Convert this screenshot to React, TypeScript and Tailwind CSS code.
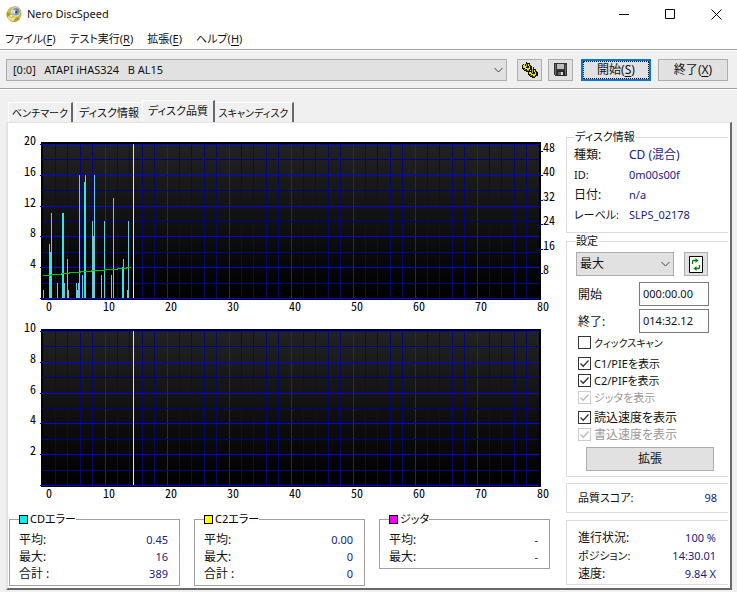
import type { ReactNode } from "react";

const MENUS = [
  { label: "ファイル", hotkey: "F" },
  { label: "テスト実行", hotkey: "R" },
  { label: "拡張", hotkey: "E" },
  { label: "ヘルプ", hotkey: "H" },
];

// plot area inside a chart, in viewBox units
const LEFT = 34;
const RIGHT = 530;
const TOP = 13;
const BOTTOM = 167;

// x offset, width, error count
const BARS = [
  [0, 1, 1],
  [6, 1, 7],
  [7, 2, 6],
  [8, 1, 11],
  [14, 1, 2],
  [19, 2, 11],
  [21, 1, 2],
  [24, 1, 5],
  [25, 1, 1],
  [33, 1, 2],
  [34, 3, 1],
  [35, 1, 2],
  [36, 1, 16],
  [39, 1, 3],
  [41, 2, 15],
  [42, 1, 16],
  [49, 1, 10],
  [50, 2, 8],
  [51, 1, 16],
  [58, 1, 3],
  [61, 1, 10],
  [68, 1, 3],
  [70, 1, 13],
  [79, 2, 4],
  [80, 1, 5],
  [84, 1, 1],
  [85, 1, 10],
];

const CHECKS = [
  { label: "クィックスキャン", checked: false, disabled: false, style: "mb-1 text-[10px]" },
  { label: "C1/PIEを表示", checked: true, disabled: false, style: "text-[11px]" },
  { label: "C2/PIFを表示", checked: true, disabled: false, style: "text-[11px]" },
  { label: "ジッタを表示", checked: true, disabled: true, style: "mb-[3px] text-[11px]" },
  { label: "読込速度を表示", checked: true, disabled: false, style: "text-[12px]" },
  { label: "書込速度を表示", checked: true, disabled: true, style: "text-[12px]" },
];

function Hotkey({ label, hotkey }: { label: string; hotkey: string }) {
  return (
    <>
      {label}(<span className="underline underline-offset-2">{hotkey}</span>)
    </>
  );
}

function Chevron() {
  return (
    <svg
      className="pointer-events-none absolute top-1/2 right-1 h-[5px] w-[9px] -translate-y-1/2"
      viewBox="0 0 9 5"
      fill="none"
      stroke="#444"
    >
      <path d="M.5 .5l4 4 4-4" />
    </svg>
  );
}

function DiscIcon() {
  return (
    <svg className="h-4 w-4" viewBox="0 0 16 16">
      <circle cx="8" cy="8" r="7.6" fill="#d3bf3c" />
      <path d="M1 6a7.5 7.5 0 0 0 13 7L8 9z" fill="#b49c20" />
      <path d="M1.500 11a7 7 0 0 0 6 4l3-4-5-3z" fill="#f0e67c" />
      <circle cx="9.5" cy="6" r="5.4" fill="#dcd9b4" stroke="#aaa36a" strokeWidth=".6" />
      <circle cx="10" cy="5.6" r="3.8" fill="#7c9fc0" />
      <path d="M6.500 3.500l3.500 1.500-1 3-2.500-1z" fill="#dfeaf2" />
      <path d="M10 2.500l3 2-2 2z" fill="#b0675a" />
      <circle cx="10.200" cy="6.200" r="1.200" fill="#2c4b78" />
      <circle cx="5.200" cy="9.800" r="1.600" fill="#fffbd8" stroke="#99882a" strokeWidth=".6" />
    </svg>
  );
}

function GearsIcon() {
  return (
    <svg className="h-4 w-[18px]" viewBox="0 0 18 16" shapeRendering="crispEdges">
      <path d="M5 0h1v1h3v2h1v1h1v4H9v1H8v1H5V9H3V8H2V7H1V3h1V2h3z" fill="#111" />
      <path d="M2 3h2v1h1v2h3V4h1v3H8v1H6V7H4V6H2z" fill="#f3e600" />
      <path d="M3 7h2v1H3zM6 8h2v1H6z" fill="#8c7c00" />
      <path d="M5 2h1v3H5z" fill="#a8a8a8" />
      <path d="M7 2h1v2H7zM3 2h1v1H3z" fill="#f3e600" />
      <path d="M12 5h1v2h2v2h1v1h1v4h-2v1h-1v1h-3v-1H9v-1H8v-1H7V9h1V8h1V7h3z" fill="#111" />
      <path d="M8 10h2v1h1v1h3v-2h1v3h-1v1h-2v-1h-2v-1H8z" fill="#f3e600" />
      <path d="M9 13h2v1H9zM12 14h2v1h-2z" fill="#8c7c00" />
      <path d="M11 7h1v4h-1z" fill="#a8a8a8" />
      <path d="M13 8h1v2h-1zM9 8h1v1H9z" fill="#f3e600" />
    </svg>
  );
}

function FloppyIcon() {
  return (
    <svg className="h-[13px] w-[13px]" viewBox="0 0 13 13" shapeRendering="crispEdges">
      <path d="M0 0h13v13H1l-1-1z" fill="#333" />
      <path d="M1 1h1v11H1zM11 2h1v10h-1z" fill="#6a6a6a" />
      <path d="M3 1h7v5H3z" fill="#bdbdbd" />
      <path d="M3 8h8v5H3z" fill="#222" />
      <path d="M4 9h5v3H4z" fill="#666" />
      <path d="M7 9h2v3H7z" fill="#ddd" />
    </svg>
  );
}

function RefreshIcon() {
  return (
    <svg className="h-[17px] w-[14px]" viewBox="0 0 14 17">
      <path d="M.5 .5h13v16H.5z" fill="#fff" stroke="#000" />
      <path d="M3.500 8V5.500q0-1 1-1H7M10.500 9v2.500q0 1-1 1H7" fill="none" stroke="#0a7d0a" strokeWidth="1.300" />
      <path d="M6.500 2l3 2.500-3 2.500zM7.500 10l-3 2.500 3 2.500z" fill="#0a7d0a" />
    </svg>
  );
}

function Chart({
  id,
  max,
  speed,
  children,
}: {
  id: string;
  max: number;
  speed?: boolean;
  children?: ReactNode;
}) {
  const rows = Array.from({ length: 11 }, (_, i) => i);
  const cols = Array.from({ length: 41 }, (_, i) => i);
  const y = (i: number) => Math.round(TOP + (i * (BOTTOM - TOP)) / 10);
  const x = (i: number) => Math.floor(LEFT + i * 12.4);

  return (
    <svg
      className="block w-full font-['Noto_Sans_CJK_JP',sans-serif] text-[12px] [font-feature-settings:'hwid']"
      viewBox="0 0 557 187"
      shapeRendering="crispEdges"
    >
      <defs>
        <linearGradient id={id} x1="0" y1="0" x2="0" y2="1">
          <stop offset="0" stopColor="#222" />
          <stop offset="1" stopColor="#000" />
        </linearGradient>
      </defs>
      <rect x={LEFT - 2} y={TOP - 2} width={RIGHT - LEFT + 4} height={BOTTOM - TOP + 4} fill="#000" />
      <rect x={LEFT} y={TOP} width={RIGHT - LEFT} height={BOTTOM - TOP} fill={`url(#${id})`} />
      {cols.slice(1, -1).map((i) => (
        <rect
          key={i}
          x={x(i)}
          y={TOP}
          width="1"
          height={BOTTOM - TOP}
          fill={i % 5 === 0 ? "#1c1cb0" : "#08086c"}
        />
      ))}
      {rows.map((i) => (
        <rect
          key={i}
          x={i % 2 ? LEFT - 2 : LEFT - 3}
          y={y(i)}
          width={RIGHT - LEFT + 3}
          height="1"
          fill={i % 2 ? "#00008c" : "#0000f0"}
        />
      ))}
      {rows
        .filter((i) => i % 2 === 0 && i < 10)
        .map((i) => (
          <text key={i} x="27" y={y(i) + 1} textAnchor="end">
            {max - (max / 10) * i}
          </text>
        ))}
      {cols
        .filter((i) => i % 5 === 0)
        .map((i) => (
          <text key={i} x={i ? x(i) + 4 : x(i) + 6} y="180" textAnchor="middle">
            {i * 2}
          </text>
        ))}
      {speed &&
        [8, 16, 24, 32, 40, 48].map((v) => (
          <g key={v}>
            <rect x={RIGHT + 1} y={Math.round(BOTTOM - v * 3.07)} width="3" height="1" fill="#0000f0" />
            <text x={RIGHT + 4} y={Math.round(BOTTOM - v * 3.07) + 1}>
              {v}
            </text>
          </g>
        ))}
      {children}
      <rect x="124" y={TOP} width="1" height={BOTTOM - TOP} fill="#e6e6dc" />
    </svg>
  );
}

function Stats({
  title,
  swatch,
  rows,
}: {
  title: string;
  swatch: string;
  rows: [string, string][];
}) {
  return (
    <fieldset className="min-w-0 flex-1 self-start border border-[#a0a0a0] px-[9px] pb-[3px]">
      <legend className="flex h-[14px] items-center gap-[2px] text-[11px] text-black">
        <span className={`h-[9px] w-[9px] border border-black ${swatch}`} />
        {title}
      </legend>
      <dl className="mt-[5px]">
        {rows.map(([name, value]) => (
          <div key={name} className="flex h-[17px] items-center justify-between">
            <dt>{name}</dt>
            <dd className="pr-[2px] text-[11px] text-[#1a1a80]">{value}</dd>
          </div>
        ))}
      </dl>
    </fieldset>
  );
}

export default function App() {
  return (
    <div className="flex min-h-screen flex-col bg-[#f0f0f0] font-['Noto_Sans','Noto_Sans_CJK_JP',sans-serif] text-[12px] leading-4 text-[#111] [font-feature-settings:'palt']">
      <header className="border-b border-[#a0a0a0] bg-white">
        <div className="flex h-7 items-center pr-[15px] pl-[6px]">
          <DiscIcon />
          <h1 className="ml-[5px] flex-1 text-[11px]">Nero DiscSpeed</h1>
          <div className="flex gap-[35px]">
            <button aria-label="最小化">
              <svg className="h-[11px] w-[11px]" viewBox="0 0 11 11" stroke="#000">
                <path d="M0 5.500h10" />
              </svg>
            </button>
            <button aria-label="最大化">
              <svg className="h-[11px] w-[11px]" viewBox="0 0 11 11" fill="none" stroke="#000">
                <path d="M.5 .5h9v9h-9z" />
              </svg>
            </button>
            <button aria-label="閉じる">
              <svg className="h-[11px] w-[11px]" viewBox="0 0 11 11" stroke="#000">
                <path d="M.5 .5l10 10M10.500 .5l-10 10" />
              </svg>
            </button>
          </div>
        </div>
        <nav className="flex h-[21px] items-center gap-[14px] pl-[5px] text-[11px]">
          {MENUS.map((m) => (
            <button key={m.hotkey}>
              <Hotkey {...m} />
            </button>
          ))}
        </nav>
      </header>

      <div className="flex h-[39px] items-center border-t border-b border-t-white border-b-[#a0a0a0] pr-[9px] pl-[6px]">
        <div className="relative mr-[10px] flex-1">
          <select
            aria-label="ドライブ"
            className="block h-[22px] w-full appearance-none border border-[#adadad] bg-[#e1e1e1] px-[6px] text-[11px]"
          >
            <option>{"[0:0]\u00a0\u00a0\u00a0ATAPI iHAS324\u00a0\u00a0\u00a0B AL15"}</option>
          </select>
          <Chevron />
        </div>
        <button
          aria-label="オプション"
          className="mr-[6px] flex h-[22px] w-[25px] items-center justify-center border border-[#adadad] bg-[#e1e1e1]"
        >
          <GearsIcon />
        </button>
        <button
          aria-label="保存"
          className="mr-2 flex h-[22px] w-[25px] items-center justify-center border border-[#adadad] bg-[#e1e1e1]"
        >
          <FloppyIcon />
        </button>
        <button className="mr-[7px] h-[22px] w-[70px] border-2 border-[#0078d7] bg-[#e1e1e1] leading-none outline-1 -outline-offset-3 outline-black outline-dotted">
          <Hotkey label="開始" hotkey="S" />
        </button>
        <button className="h-[22px] w-[70px] border border-[#adadad] bg-[#e1e1e1] leading-none">
          <Hotkey label="終了" hotkey="X" />
        </button>
      </div>

      <main className="flex flex-1 flex-col border-t border-white pt-[10px] pr-[5px] pb-[2px] pl-[6px]">
        <div role="tablist" className="flex items-end pl-[2px] text-[11px]">
          <button
            role="tab"
            className="mr-[2px] h-[20px] w-[65px] border-t border-r-2 border-l border-t-white border-r-[#696969] border-l-white text-[10px]"
          >
            ベンチマーク
          </button>
          <button role="tab" className="h-[20px] w-[67px] border-t border-l border-white">
            ディスク情報
          </button>
          <button
            role="tab"
            aria-selected="true"
            className="h-[22px] w-[73px] border-t border-r-2 border-l border-t-white border-r-[#696969] border-l-white pb-[2px]"
          >
            ディスク品質
          </button>
          <button
            role="tab"
            className="h-[20px] w-[79px] border-t border-r-2 border-t-white border-r-[#696969] text-[10px]"
          >
            スキャンディスク
          </button>
        </div>

        <div className="flex flex-1 border-t border-r-2 border-b-2 border-l-2 border-t-[#e3e3e3] border-r-[#696969] border-b-[#696969] border-l-[#e3e3e3] bg-white">
          <section className="flex min-w-0 flex-1 flex-col pt-2 pl-px">
            <Chart id="errors" max={20} speed>
              {BARS.map(([bx, w, v], i) => (
                <rect
                  key={i}
                  x={LEFT + bx}
                  y={BOTTOM - Math.round(v * 7.7)}
                  width={w}
                  height={Math.round(v * 7.7)}
                  fill={w > 1 ? "#38e4e4" : "#70c8d0"}
                />
              ))}
              <path
                d="M34 144.500h8v-1h10v-1h8v-1h11v-1h11v-1h13v-1h13v-1h9v-1h5"
                fill="none"
                stroke="#00c800"
              />
            </Chart>
            <Chart id="c2" max={10} />
            <div className="mt-[7px] flex gap-[14px] pr-4">
              <Stats
                title="CDエラー"
                swatch="bg-[#00f0f0]"
                rows={[
                  ["平均:", "0.45"],
                  ["最大:", "16"],
                  ["合計 :", "389"],
                ]}
              />
              <Stats
                title="C2エラー"
                swatch="bg-[#ffff00]"
                rows={[
                  ["平均:", "0.00"],
                  ["最大:", "0"],
                  ["合計 :", "0"],
                ]}
              />
              <Stats
                title="ジッタ"
                swatch="bg-[#f000f0]"
                rows={[
                  ["平均:", "-"],
                  ["最大:", "-"],
                ]}
              />
            </div>
          </section>

          <aside className="mr-[2px] flex w-[162px] shrink-0 flex-col pt-[6px]">
            <fieldset className="h-[104px] border border-r-0 border-[#dcdcdc] pl-[7px]">
              <legend className="h-4 px-px text-[11px]">ディスク情報</legend>
              <dl className="grid auto-rows-[20px] grid-cols-[55px_1fr] items-center">
                <dt>種類:</dt>
                <dd className="text-[#1a1a80]">CD (混合)</dd>
                <dt className="text-[11px]">ID:</dt>
                <dd className="text-[11px] text-[#1a1a80]">0m00s00f</dd>
                <dt>日付:</dt>
                <dd className="text-[11px] text-[#1a1a80]">n/a</dd>
                <dt className="text-[11px]">レーベル:</dt>
                <dd className="text-[11px] text-[#1a1a80]">SLPS_02178</dd>
              </dl>
            </fieldset>

            <fieldset className="h-[244px] border border-r-0 border-[#dcdcdc] pl-[9px]">
              <legend className="h-4 text-[11px]">設定</legend>
              <div className="mt-[3px] flex gap-[10px]">
                <div className="relative">
                  <select
                    aria-label="速度"
                    className="block h-6 w-[98px] appearance-none border border-[#adadad] bg-[#e1e1e1] px-[3px]"
                  >
                    <option>最大</option>
                  </select>
                  <Chevron />
                </div>
                <button
                  aria-label="更新"
                  className="flex h-6 w-6 items-center justify-center border border-[#adadad] bg-[#e1e1e1]"
                >
                  <RefreshIcon />
                </button>
              </div>
              <div className="mt-[6px] grid grid-cols-[61px_70px] items-center gap-y-[3px] pl-[2px]">
                <label htmlFor="start" className="pt-[2px]">
                  開始
                </label>
                <input
                  id="start"
                  defaultValue="000:00.00"
                  className="h-6 border border-[#7a7a7a] bg-white px-[3px] pb-[2px] text-[11px]"
                />
                <label htmlFor="end" className="pt-[2px]">
                  終了:
                </label>
                <input
                  id="end"
                  defaultValue="014:32.12"
                  className="h-6 border border-[#7a7a7a] bg-white px-[3px] pb-[2px] text-[11px]"
                />
              </div>
              <div className="mt-px pl-[2px]">
                {CHECKS.map((c) => (
                  <label
                    key={c.label}
                    className={`flex h-[17px] items-center gap-[3px] ${c.style} ${
                      c.disabled ? "text-[#999]" : ""
                    }`}
                  >
                    <span className="grid">
                      <input
                        type="checkbox"
                        defaultChecked={c.checked}
                        disabled={c.disabled}
                        className="peer col-start-1 row-start-1 h-[13px] w-[13px] appearance-none border border-[#333] bg-white disabled:border-[#ccc]"
                      />
                      <svg
                        className="pointer-events-none invisible col-start-1 row-start-1 h-[13px] w-[13px] text-[#333] peer-checked:visible peer-disabled:text-[#bbb]"
                        viewBox="0 0 13 13"
                        fill="none"
                        stroke="currentColor"
                        strokeWidth="1.300"
                      >
                        <path d="M2.500 6.500l2.700 2.700 5.300-5.700" />
                      </svg>
                    </span>
                    {c.label}
                  </label>
                ))}
              </div>
              <button className="mt-1 ml-[10px] block h-6 w-32 border border-[#adadad] bg-[#e1e1e1]">
                拡張
              </button>
            </fieldset>

            <dl className="mt-[6px] flex h-[30px] items-center justify-between border border-r-0 border-[#dcdcdc] px-[11px]">
              <dt className="text-[11px]">品質スコア:</dt>
              <dd className="text-[11px] text-[#1a1a80]">98</dd>
            </dl>

            <dl className="mt-[7px] h-[65px] border border-r-0 border-[#dcdcdc] pt-2 pr-[12px] pl-[11px]">
              <div className="flex h-[18px] items-center justify-between">
                <dt>進行状況:</dt>
                <dd className="text-[11px] text-[#1a1a80]">100 %</dd>
              </div>
              <div className="flex h-[18px] items-center justify-between">
                <dt className="text-[11px]">ポジション:</dt>
                <dd className="text-[11px] text-[#1a1a80]">14:30.01</dd>
              </div>
              <div className="flex h-[18px] items-center justify-between">
                <dt>速度:</dt>
                <dd className="text-[11px] text-[#1a1a80]">9.84 X</dd>
              </div>
            </dl>
          </aside>
        </div>
      </main>
    </div>
  );
}
